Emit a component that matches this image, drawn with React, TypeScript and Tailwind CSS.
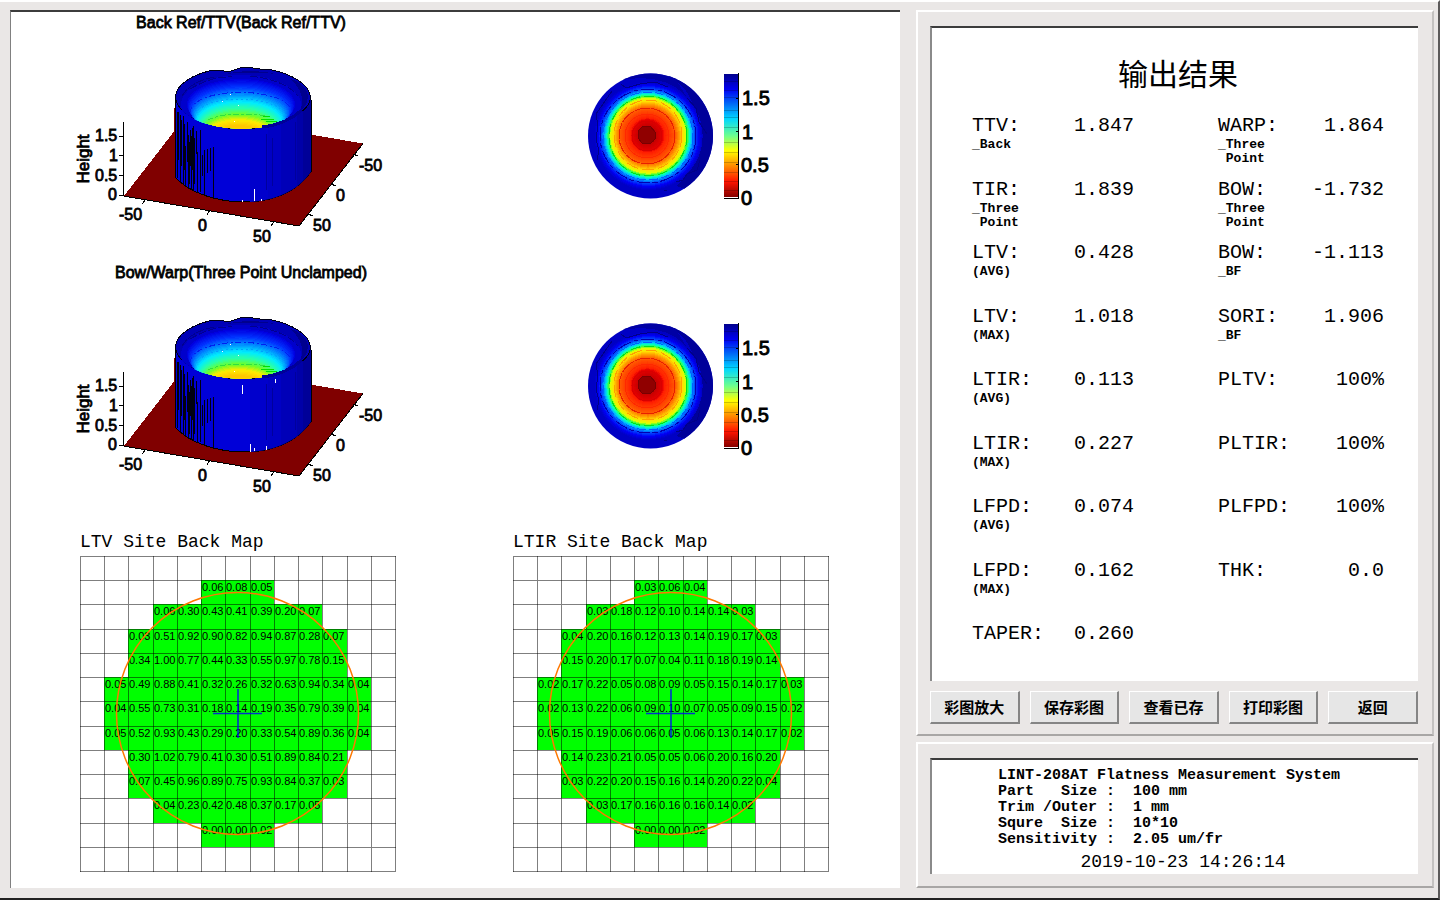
import React from "react";

type Rgb = [number, number, number];
type Stop = [number, Rgb];

const mix = (stops: Stop[], t: number): string => {
  let i = 0;
  while (i < stops.length - 2 && t > stops[i + 1][0]) i++;
  const [a, ca] = stops[i];
  const [b, cb] = stops[i + 1];
  const k = Math.min(1, Math.max(0, (t - a) / (b - a)));
  return `rgb(${ca.map((c, n) => Math.round(c + (cb[n] - c) * k)).join(",")})`;
};

const range = (n: number) => Array.from({ length: n }, (_, i) => i);

const BOWL: Stop[] = [
  [0, [0, 0, 225]],
  [0.16, [0, 50, 255]],
  [0.32, [0, 140, 255]],
  [0.48, [0, 235, 255]],
  [0.62, [40, 255, 170]],
  [0.76, [110, 255, 40]],
  [0.88, [255, 235, 0]],
  [1, [255, 200, 0]],
];

const BAR: Stop[] = [
  [0, [0, 0, 143]],
  [0.12, [0, 0, 240]],
  [0.36, [0, 215, 255]],
  [0.5, [110, 255, 140]],
  [0.62, [255, 255, 0]],
  [0.87, [255, 20, 0]],
  [1, [128, 0, 0]],
];

const DISC: Stop[] = [
  [0, [135, 0, 0]],
  [9, [150, 0, 0]],
  [10, [200, 0, 0]],
  [16, [230, 0, 0]],
  [18, [255, 30, 0]],
  [28, [255, 90, 0]],
  [32, [255, 160, 0]],
  [35, [255, 225, 0]],
  [38, [220, 255, 0]],
  [40, [60, 255, 60]],
  [42, [0, 255, 190]],
  [44, [0, 190, 255]],
  [47, [0, 80, 255]],
  [51, [0, 0, 245]],
  [54, [0, 0, 205]],
];

const surfaceLabels: [number, number, string][] = [
  [95, 141, "1.5"],
  [109, 161, "1"],
  [95, 181, "0.5"],
  [108, 200, "0"],
  [119, 220, "-50"],
  [198, 231, "0"],
  [253, 242, "50"],
  [359, 171, "-50"],
  [336, 201, "0"],
  [313, 231, "50"],
];

const streaks: [number, number, number][] = [
  [177, 112, 178], [178, 112, 160], [180, 115, 184], [181, 120, 166], [183, 116, 186],
  [184, 124, 170], [185, 146, 188], [187, 122, 162], [188, 135, 190], [189, 142, 184],
  [190, 130, 166], [191, 136, 192], [192, 128, 170], [193, 126, 194], [194, 138, 184],
  [196, 131, 154], [197, 152, 195], [200, 130, 192], [202, 155, 176], [204, 150, 197],
  [207, 149, 173], [210, 148, 171], [213, 147, 199],
];

function SurfacePlot({ id, title, titleX, gaps }: { id: string; title: string; titleX: number; gaps: [number, number, number][] }) {
  return (
    <svg role="img" aria-label={title} width="440" height="250" viewBox="0 0 440 250" className="shrink-0">
      <defs>
        <clipPath id={`${id}-rim`}>
          <ellipse cx="242" cy="98" rx="66" ry="30.5" />
        </clipPath>
        <clipPath id={`${id}-wall`}>
          <path d="M175 98 V177 C190 194 220 202 244 202 C275 202 300 190 312 170 L311 98 Z" />
        </clipPath>
      </defs>
      <g shapeRendering="crispEdges">
        <path d="M124 196 L299 226 L363 143.5 L188 113.5 Z" fill="#800000" />
        <path d="M174 108 V132 L178 140 V108 Z" fill="#800000" />
        <path d="M123.5 122 V196 L299 226 L363 143.5" fill="none" stroke="#000" />
        <path d="M119 136.5 H123 M119 155.5 H123 M119 175.5 H123 M119 195.5 H123 M146 199 L142 204 M210 210 L207 215 M274 222 L271 226 M353 154 L358 156 M331 184 L336 186 M308 214 L313 216" stroke="#000" />
        <path
          d="M175 98 V177 C190 194 220 202 244 202 C275 202 300 190 312 170 L311 98 Z"
          fill="#0000d8"
          stroke="#000"
        />
        <g clipPath={`url(#${id}-wall)`}>
          <rect x="250" y="90" width="18" height="120" fill="#0000cc" />
          <rect x="268" y="90" width="13" height="120" fill="#0000c4" />
          <rect x="281" y="90" width="16" height="120" fill="#0000b8" />
          <rect x="297" y="90" width="6" height="120" fill="#0000a8" />
          <rect x="303" y="90" width="8" height="120" fill="#000098" />
          <path d="M266.5 134 V190 M272.5 138 V186 M295.5 122 V180" stroke="#00009c" />
          {streaks.map(([x, a, b]) => (
            <path key={x} d={`M${x + 0.5} ${a} V${b}`} stroke="#000010" />
          ))}
        </g>
        <path
          d="M175.5 97 C176 84 193 75 209 71 C217 69 223 72 231 71 C236 69 242 67 248 67 C253 68 261 70 272 70 C290 74 309 83 310.5 97 C310 113 280 128 241 129 C204 128 176 113 175.5 97 Z"
          fill="#0000b6"
          stroke="#000018"
        />
        <path d="M296 81 C310 88 312 100 300 112 C304 100 303 90 290 79 Z M225 74 Q250 68 276 74 Q250 71 225 74 Z" fill="#00008e" />
        <g clipPath={`url(#${id}-rim)`}>
          <ellipse cx="241" cy="105" rx="60" ry="30" fill="#0000cc" />
          {range(40).map((i) => {
            const t = i / 39;
            const rx = 54 - 24 * t;
            const ry = rx * 0.47;
            return <ellipse key={i} cx={241 - t * 3} cy={79 + 46 * t + ry} rx={rx} ry={ry} fill={mix(BOWL, t)} />;
          })}
          <path d="M190 112 Q194 94 240 92 Q286 94 292 111" fill="none" stroke="#0020f0" strokeDasharray="6 3 2 2" />
          <path d="M198 110 Q212 99 240 99 Q270 100 284 111" fill="none" stroke="#00a0ff" strokeDasharray="2 3" />
          <path d="M208 120 Q220 114 240 114 Q260 114 270 117" fill="none" stroke="#30e040" strokeDasharray="6 2 3 2" />
          <path d="M263 116.5 H270 M261 119 H274 M266 121 H277" stroke="#00e000" />
          <path d="M182 96 Q190 82 214 77 M190 89 Q212 76 232 77 M250 76 Q285 80 298 96" fill="none" stroke="#000090" strokeDasharray="8 2" />
        </g>
        <path d="M262 127 Q285 125 302 110" fill="none" stroke="#000098" strokeWidth="3" />
        <path d="M230 94.5 h1 M222 101.5 h1 M238 105.5 h1 M234 121.5 h1" stroke="#fff" />
        {gaps.map(([x, a, b]) => (
          <path key={`${x}-${a}`} d={`M${x + 0.5} ${a} V${b}`} stroke="#fff" />
        ))}
      </g>
      <g className="font-['Liberation_Sans',sans-serif] text-[16px]" fill="#000" stroke="#000" strokeWidth="0.8">
        <text x={titleX} y="28" textAnchor="middle">{title}</text>
        {surfaceLabels.map(([x, y, s]) => (
          <text key={`${x}-${y}`} x={x} y={y}>{s}</text>
        ))}
        <text className="text-[17px]" transform="translate(89 159) rotate(-90)" textAnchor="middle">Height</text>
      </g>
    </svg>
  );
}

const scaleLabels: [number, string][] = [
  [105, "1.5"],
  [139, "1"],
  [172, "0.5"],
  [205, "0"],
];

function ContourMap({ id, label }: { id: string; label: string }) {
  return (
    <svg role="img" aria-label={label} width="220" height="250" viewBox="570 0 220 250" className="shrink-0">
      <defs>
        <clipPath id={`${id}-disc`}>
          <circle cx="650.5" cy="136" r="62.5" />
        </clipPath>
      </defs>
      <g shapeRendering="crispEdges">
        <g clipPath={`url(#${id}-disc)`}>
          <rect x="585" y="70" width="130" height="130" fill="#0000c4" />
          <path d="M664 74 C690 84 698 110 698 136 C698 160 690 174 676 186 L720 200 V70 Z" fill="#00009a" />
          <path d="M615 82 C640 74 670 78 686 96 L670 70 H620 Z" fill="#0000a4" />
          {range(54).map((i) => {
            const r = 54 - i;
            return <circle key={r} cx={647 + r * 0.03} cy={135 + r * 0.02} r={r} fill={mix(DISC, r)} />;
          })}
          <g fill="none">
            <ellipse cx="648" cy="136" rx="48" ry="47" stroke="#0000b0" strokeDasharray="14 3 5 2" />
            <ellipse cx="648" cy="136" rx="45" ry="44" stroke="#0060ff" strokeDasharray="9 3" />
            <ellipse cx="648" cy="136" rx="39" ry="40" stroke="#00e020" strokeDasharray="10 4" />
            <ellipse cx="648" cy="135" rx="34" ry="35" stroke="#ffa000" strokeDasharray="12 4" />
            <ellipse cx="647" cy="136" rx="28" ry="28" stroke="#e82000" strokeDasharray="16 1" />
            <ellipse cx="647" cy="136" rx="22" ry="22" stroke="#ff2800" />
            <ellipse cx="647" cy="136" rx="15" ry="15" stroke="#d80000" />
            <path d="M642 127 L650 126 L655 132 L655 139 L650 144 L642 143 L638 138 L638 131 Z" fill="#900000" stroke="#780000" />
            <path
              d="M597 160 L599 150 L596 140 L598 125 L596 114 L603 104 L612 91 M621 84 L626 88 L640 84 L655 82 L668 87 M687 98 L696 108 L699 122 L707 134 M676 182 L683 180 L687 174 L697 170 L700 160 M664 190 h3"
              stroke="#000088"
            />
          </g>
        </g>
        {range(124).map((i) => (
          <rect key={i} x="724" y={74 + i} width="14" height="1" fill={mix(BAR, i / 123)} />
        ))}
        <path d="M724 81.5 h14 M724 90.5 h14 M724 97.5 h14 M724 110.5 h14 M724 117.5 h14 M724 127.5 h14 M724 142.5 h14 M724 152.5 h14 M724 162.5 h14 M724 172.5 h14 M724 181.5 h14 M724 190.5 h14" stroke="#000" strokeOpacity="0.2" />
        <path d="M724 197.5 H738" stroke="#fff" />
        <path d="M738.5 73 V199 M724 198.5 H739 M736 98.5 h3 M736 131.5 h3 M736 164.5 h3" stroke="#000" />
      </g>
      <g className="font-['Liberation_Sans',sans-serif] text-[20px]" fill="#000" stroke="#000" strokeWidth="0.9">
        {scaleLabels.map(([y, s]) => (
          <text key={s} x={s.startsWith("1") ? 742 : 741} y={y}>{s}</text>
        ))}
      </g>
    </svg>
  );
}

const LTV_ROWS = [
  "0.06 0.08 0.05",
  "0.06 0.30 0.43 0.41 0.39 0.20 0.07",
  "0.03 0.51 0.92 0.90 0.82 0.94 0.87 0.28 0.07",
  "0.34 1.00 0.77 0.44 0.33 0.55 0.97 0.78 0.15",
  "0.05 0.49 0.88 0.41 0.32 0.26 0.32 0.63 0.94 0.34 0.04",
  "0.04 0.55 0.73 0.31 0.18 0.14 0.19 0.35 0.79 0.39 0.04",
  "0.05 0.52 0.93 0.43 0.29 0.20 0.33 0.54 0.89 0.36 0.04",
  "0.30 1.02 0.79 0.41 0.30 0.51 0.89 0.84 0.21",
  "0.07 0.45 0.96 0.89 0.75 0.93 0.84 0.37 0.03",
  "0.04 0.23 0.42 0.48 0.37 0.17 0.05",
  "0.00 0.00 0.02",
].map((r) => r.split(" "));

const LTIR_ROWS = [
  "0.03 0.06 0.04",
  "0.03 0.18 0.12 0.10 0.14 0.14 0.03",
  "0.04 0.20 0.16 0.12 0.13 0.14 0.19 0.17 0.03",
  "0.15 0.20 0.17 0.07 0.04 0.11 0.18 0.19 0.14",
  "0.02 0.17 0.22 0.05 0.08 0.09 0.05 0.15 0.14 0.17 0.03",
  "0.02 0.13 0.22 0.06 0.09 0.10 0.07 0.05 0.09 0.15 0.02",
  "0.05 0.15 0.19 0.06 0.06 0.05 0.06 0.13 0.14 0.17 0.02",
  "0.14 0.23 0.21 0.05 0.05 0.06 0.20 0.16 0.20",
  "0.03 0.22 0.20 0.15 0.16 0.14 0.20 0.22 0.04",
  "0.03 0.17 0.16 0.16 0.16 0.14 0.02",
  "0.00 0.00 0.02",
].map((r) => r.split(" "));

const line = (i: number) => Math.round((i * 315) / 13);

function SiteMap({ title, rows }: { title: string; rows: string[][] }) {
  return (
    <section className="w-[316px] shrink-0">
      <h2 className="mb-0.5 font-['Liberation_Mono',monospace] text-[18px] leading-6 whitespace-nowrap">{title}</h2>
      <svg role="img" aria-label={title} width="316" height="316" viewBox="0 0 316 316" className="block">
        <g shapeRendering="crispEdges">
          {rows.map((r, j) => {
            const first = (13 - r.length) / 2;
            return (
              <rect
                key={j}
                x={line(first)}
                y={line(j + 1)}
                width={line(first + r.length) - line(first)}
                height={line(j + 2) - line(j + 1)}
                fill="#00ff00"
              />
            );
          })}
        </g>
        <g className="font-['Liberation_Sans',sans-serif] text-[11px]" fill="#000">
          {rows.map((r, j) =>
            r.map((v, i) => (
              <text key={`${i}-${j}`} x={line((13 - r.length) / 2 + i) + 1} y={line(j + 1) + 11}>
                {v}
              </text>
            )),
          )}
        </g>
        <g shapeRendering="crispEdges" stroke="#000" strokeOpacity="0.5">
          {range(14).map((i) => (
            <path key={i} d={`M${line(i) + 0.5} 0 V316 M0 ${line(i) + 0.5} H316`} />
          ))}
        </g>
        <circle cx="157.5" cy="157.5" r="121" fill="none" stroke="#ff7800" strokeWidth="1.5" />
        <path d="M133 157.5 H182 M158 133 V182" stroke="#0000ff" strokeOpacity="0.8" strokeWidth="1.6" />
      </svg>
    </section>
  );
}

type Metric = { name: string; note?: string; value: string };

const leftMetrics: Metric[] = [
  { name: "TTV:", note: "_Back", value: "1.847" },
  { name: "TIR:", note: "_Three\n Point", value: "1.839" },
  { name: "LTV:", note: "(AVG)", value: "0.428" },
  { name: "LTV:", note: "(MAX)", value: "1.018" },
  { name: "LTIR:", note: "(AVG)", value: "0.113" },
  { name: "LTIR:", note: "(MAX)", value: "0.227" },
  { name: "LFPD:", note: "(AVG)", value: "0.074" },
  { name: "LFPD:", note: "(MAX)", value: "0.162" },
  { name: "TAPER:", value: "0.260" },
];

const rightMetrics: Metric[] = [
  { name: "WARP:", note: "_Three\n Point", value: "1.864" },
  { name: "BOW:", note: "_Three\n Point", value: "-1.732" },
  { name: "BOW:", note: "_BF", value: "-1.113" },
  { name: "SORI:", note: "_BF", value: "1.906" },
  { name: "PLTV:", value: "100%" },
  { name: "PLTIR:", value: "100%" },
  { name: "PLFPD:", value: "100%" },
  { name: "THK:", value: "0.0" },
];

function MetricList({ items }: { items: Metric[] }) {
  return (
    <dl className="grid h-[572px] grid-rows-9">
      {items.map((m, i) => (
        <div key={i} className="flex items-start justify-between">
          <dt className="text-[20px] leading-6">
            {m.name}
            {m.note && <small className="block text-[13px] leading-[14px] font-bold whitespace-pre">{m.note}</small>}
          </dt>
          <dd className="text-[20px] leading-6">{m.value}</dd>
        </div>
      ))}
    </dl>
  );
}

const actions = ["彩图放大", "保存彩图", "查看已存", "打印彩图", "返回"];

const info = [
  "LINT-208AT Flatness Measurement System",
  "Part   Size :  100 mm",
  "Trim /Outer :  1 mm",
  "Squre  Size :  10*10",
  "Sensitivity :  2.05 um/fr",
];

export default function App() {
  return (
    <div className="flex min-h-screen gap-4 border-t-2 border-r-2 border-b-2 border-t-white border-r-[#5c5a5a] border-b-[#222] bg-[#eae7e6] pt-2 pr-1 pb-2.5 pl-2.5 text-black">
      <main className="min-w-0 flex-1 border-t-2 border-l border-t-[#3c3c3c] border-l-[#808080] bg-white">
        <div className="-mt-3 -ml-[11px]">
          <div className="flex">
            <SurfacePlot id="ttv" title="Back Ref/TTV(Back Ref/TTV)" titleX={241} gaps={[[254, 189, 201], [242, 200, 202], [261, 199, 201]]} />
            <div className="w-[130px] shrink" />
            <ContourMap id="ttv-map" label="Back Ref/TTV" />
          </div>
          <div className="flex">
            <SurfacePlot
              id="bow"
              title="Bow/Warp(Three Point Unclamped)"
              titleX={241}
              gaps={[[242, 135, 144], [275, 129, 133], [250, 194, 202], [254, 198, 201], [266, 196, 200]]}
            />
            <div className="w-[130px] shrink" />
            <ContourMap id="bow-map" label="Bow/Warp" />
          </div>
          <div className="mt-[30px] flex gap-[117px] pl-20">
            <SiteMap title="LTV Site Back Map" rows={LTV_ROWS} />
            <SiteMap title="LTIR Site Back Map" rows={LTIR_ROWS} />
          </div>
        </div>
      </main>

      <aside className="flex w-[518px] shrink-0 flex-col gap-1.5 font-['Liberation_Mono','Noto_Sans_CJK_SC',monospace]">
        <section className="flex flex-1 flex-col border-2 border-t-white border-r-[#c4c2c1] border-b-[#a8a6a5] border-l-white pt-3.5 pr-3.5 pb-2.5 pl-3">
          <div className="flex-1 border-t-2 border-l-2 border-t-[#3c3c3c] border-l-[#8a8a8a] bg-white pr-[34px] pl-10">
            <h1 className="mt-5 text-center font-['Noto_Sans_CJK_SC',sans-serif] text-[30px] leading-12">输出结果</h1>
            <div className="mt-[18px] -mb-4 grid grid-cols-[162px_166px] justify-between">
              <MetricList items={leftMetrics} />
              <MetricList items={rightMetrics} />
            </div>
          </div>
          <div className="mt-2.5 flex gap-2.5">
            {actions.map((a) => (
              <button
                key={a}
                type="button"
                className="h-[33px] flex-1 border-t border-r-2 border-b-2 border-l border-t-white border-r-[#858585] border-b-[#858585] border-l-white bg-[#e6e6e6] font-['Noto_Sans_CJK_SC',sans-serif] text-[15px] leading-5 font-bold"
              >
                {a}
              </button>
            ))}
          </div>
        </section>
        <section className="border-2 border-t-white border-r-[#c4c2c1] border-b-[#a8a6a5] border-l-white pt-3.5 pr-3.5 pb-3 pl-3">
          <div className="border-t-2 border-l-2 border-t-[#3c3c3c] border-l-[#8a8a8a] bg-white pt-2">
            <div className="pl-[66px] text-[15px] leading-4 font-bold">
              {info.map((t) => (
                <p key={t} className="whitespace-pre">{t}</p>
              ))}
            </div>
            <p className="pt-0.5 pl-4 text-center text-[18px] leading-6">2019-10-23 14:26:14</p>
          </div>
        </section>
      </aside>
    </div>
  );
}
